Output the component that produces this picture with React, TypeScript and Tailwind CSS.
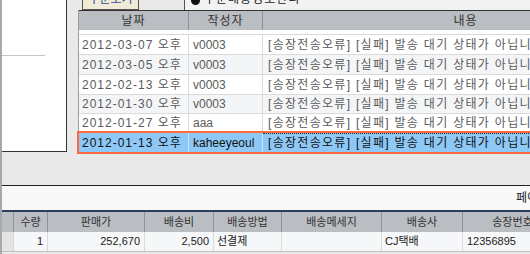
const rows = [
  { date: '2012-03-07 오후', user: 'v0003', h: 'h-[20px]', bg: 'bg-white' },
  { date: '2012-03-05 오후', user: 'v0003', h: 'h-[20px]', bg: 'bg-[#f4f5f7]' },
  { date: '2012-02-13 오후', user: 'v0003', h: 'h-[20px]', bg: 'bg-white' },
  { date: '2012-01-30 오후', user: 'v0003', h: 'h-[19px]', bg: 'bg-[#f4f5f7]' },
  { date: '2012-01-27 오후', user: 'aaa', h: 'h-[19px]', bg: 'bg-white' },
];

const msg = '[송장전송오류] [실패] 발송 대기 상태가 아닙니다';

const bottomCols = [
  { label: '', w: 'w-[12px]' },
  { label: '수량', w: 'w-[34px]' },
  { label: '판매가', w: 'w-[97px]' },
  { label: '배송비', w: 'w-[69px]' },
  { label: '배송방법', w: 'w-[68px]' },
  { label: '배송메세지', w: 'w-[100px]' },
  { label: '배송사', w: 'w-[81px]' },
  { label: '송장번호', w: 'w-[100px]' },
];

export default function App() {
  return (
    <div className="w-[530px] h-[254px] overflow-hidden bg-[#e9e9e9] border-l-2 border-[#a8a8a8] font-['Liberation_Sans','Noto_Sans_CJK_KR',sans-serif] text-[12px] leading-none">
      {/* Top area */}
      <div className="flex h-[185px]">
        <div className="w-[65px] shrink-0 h-[152px] bg-white border-r border-b border-[#333]">
          <div className="h-[55px]" />
          <div className="w-[43px] h-px bg-[#c4c4c4]" />
        </div>
        <div className="w-[11px] shrink-0" />
        <div className="flex-1 min-w-0">
          {/* Tabs */}
          <div className="flex h-[10px] items-end">
            <div className="w-[4px] shrink-0" />
            <div className="w-[57px] h-[10px] shrink-0 bg-[#f0ebd6] border-x border-b border-[#555] overflow-hidden">
              <div className="-mt-[7px] text-center text-[#2a4a9a]">주문보기</div>
            </div>
            <div className="w-[45px] shrink-0" />
            <div className="flex-1 h-[10px] bg-[#f2f2f2] border-l border-[#555] overflow-hidden flex items-start gap-[4px] pl-[6px]">
              <div className="w-[9px] h-[9px] -mt-[4px] rounded-full bg-[#111] shrink-0" />
              <div className="-mt-[7px] whitespace-nowrap text-[#222] tracking-[1px]">주문배송정보관리</div>
            </div>
          </div>
          {/* Grid */}
          <div className="w-[592px] border-l border-[#9a9a9a] bg-white">
            <div className="flex h-[20px] bg-[#babdc1] border-t border-[#333] text-[#333] tracking-[1px]">
              <div className="w-[110px] flex items-center justify-center border-r border-[#8c9298]">날짜</div>
              <div className="w-[74px] flex items-center justify-center border-r border-[#8c9298]">작성자</div>
              <div className="w-[406px] flex items-center justify-center border-r border-[#8c9298]">내용</div>
            </div>
            <div className="h-[5px] border-b border-[#dadada] bg-white" />
            {rows.map((r) => (
              <div key={r.date} className={`flex ${r.h} ${r.bg} border-b border-[#dadada] text-[#5a5a5a]`}>
                <div className="w-[110px] flex items-center pl-[3px] border-r border-[#dadada] whitespace-nowrap tracking-[1px]">{r.date}</div>
                <div className="w-[74px] flex items-center pl-[4px] border-r border-[#dadada] whitespace-nowrap">{r.user}</div>
                <div className="w-[406px] flex items-center pl-[5px] whitespace-nowrap overflow-hidden tracking-[1.3px]">{msg}</div>
              </div>
            ))}
            <div className="flex h-[19px] bg-[#8ec8f6] outline-2 outline-[#ff6a3d] text-[#111] relative">
              <div className="w-[110px] flex items-center pl-[3px] border-r border-[#c8e2f8] whitespace-nowrap tracking-[1px]">2012-01-13 오후</div>
              <div className="w-[74px] flex items-center pl-[4px] border-r border-[#c8e2f8] whitespace-nowrap">kaheeyeoul</div>
              <div className="w-[406px] flex items-center pl-[5px] whitespace-nowrap overflow-hidden border-t border-dotted border-[#222] tracking-[1.3px]">{msg}</div>
            </div>
          </div>
        </div>
      </div>

      {/* Divider + pager panel */}
      <div className="h-px bg-[#222]" />
      <div className="h-[24px] bg-[#f8f8f8] flex items-center pl-[514px] whitespace-nowrap text-[#222]">페이지</div>

      {/* Bottom grid */}
      <div className="border-t-2 border-[#2b3f5c] w-[600px] text-[11px]">
        <div className="flex h-[20px] bg-[#babdc1] text-[#333]">
          {bottomCols.map((c, i) => (
            <div key={i} className={`${c.w} shrink-0 flex items-center justify-center border-r border-[#8c9298] whitespace-nowrap`}>
              {c.label}
            </div>
          ))}
        </div>
        <div className="flex h-[20px] bg-[#f6f7f8] border-b border-[#c0c0c0] text-[#222]">
          <div className="w-[12px] shrink-0 bg-[#e4e4e4] border-r border-[#d6d6d6]" />
          <div className="w-[34px] shrink-0 flex items-center justify-end pr-[4px] border-r border-[#dadada]">1</div>
          <div className="w-[97px] shrink-0 flex items-center justify-end pr-[4px] border-r border-[#dadada]">252,670</div>
          <div className="w-[69px] shrink-0 flex items-center justify-end pr-[4px] border-r border-[#dadada]">2,500</div>
          <div className="w-[68px] shrink-0 flex items-center pl-[3px] border-r border-[#dadada]">선결제</div>
          <div className="w-[100px] shrink-0 border-r border-[#dadada]" />
          <div className="w-[81px] shrink-0 flex items-center pl-[3px] border-r border-[#dadada]">CJ택배</div>
          <div className="w-[100px] shrink-0 flex items-center pl-[4px] border-r border-[#dadada]">12356895</div>
        </div>
      </div>
    </div>
  );
}
